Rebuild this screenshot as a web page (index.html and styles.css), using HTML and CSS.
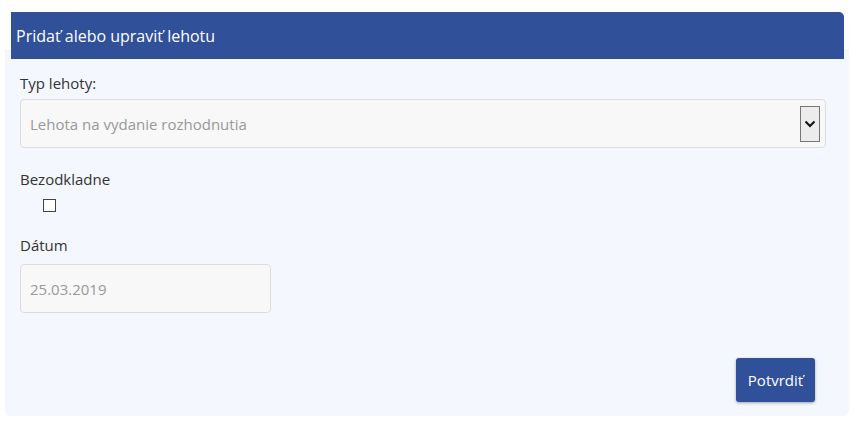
FILE: index.html
```html
<!DOCTYPE html>
<html lang="sk">
<head>
<meta charset="utf-8">
<link rel="stylesheet" href="styles.css">
</head>
<body>
<div class="page">
  <div class="header">Pridať alebo upraviť lehotu</div>
  <div class="panel">
    <div class="field field-type">
      <div class="label">Typ lehoty:</div>
      <div class="select">
        <span class="placeholder">Lehota na vydanie rozhodnutia</span>
        <span class="arrow">
          <svg width="12" height="8" viewBox="0 0 12 8"><path d="M1.5 1.5 L6 6 L10.5 1.5" fill="none" stroke="#111" stroke-width="2"/></svg>
        </span>
      </div>
    </div>
    <div class="field field-check">
      <div class="label">Bezodkladne</div>
      <div class="checkbox"></div>
    </div>
    <div class="field field-date">
      <div class="label">Dátum</div>
      <div class="input">25.03.2019</div>
    </div>
    <div class="actions">
      <button class="btn">Potvrdiť</button>
    </div>
  </div>
</div>
</body>
</html>
```
FILE: styles.css
```css
html, body {
  margin: 0;
  padding: 0;
  background: #ffffff;
}
body {
  font-family: "Open Sans", "Noto Sans", sans-serif;
  font-size: 15px;
  color: #333;
}
.page {
  padding: 12px 8px 0 5px;
}
.header {
  position: relative;
  z-index: 1;
  margin: 0 5px 0 6px;
  height: 47px;
  box-sizing: border-box;
  padding: 0 5px;
  display: flex;
  align-items: center;
  background: #30509a;
  color: #fff;
  font-size: 16px;
  border-radius: 0 5px 0 0;
}
.panel {
  margin-top: -10px;
  padding: 24px 23px 14px 15px;
  background: #f4f7fe;
  border-radius: 0 0 6px 6px;
  height: 367px;
  box-sizing: border-box;
  display: flex;
  flex-direction: column;
}
.label {
  line-height: 20px;
  color: #333;
}
.select {
  margin-top: 6px;
  height: 49px;
  box-sizing: border-box;
  border: 1px solid #dcdcdc;
  border-radius: 4px;
  background: #f8f8f8;
  display: flex;
  align-items: center;
  justify-content: space-between;
  padding: 0 5px 0 9px;
}
.placeholder, .input {
  color: #999;
  font-size: 15px;
}
.arrow {
  width: 20px;
  height: 36px;
  box-sizing: border-box;
  border: 1px solid #777;
  background: #ececec;
  display: flex;
  align-items: center;
  justify-content: center;
}
.field-check {
  margin-top: 21px;
}
.checkbox {
  margin: 10px 0 0 23px;
  width: 13px;
  height: 13px;
  box-sizing: border-box;
  border: 1px solid #444;
  background: #fff;
}
.field-date {
  margin-top: 23px;
}
.input {
  margin-top: 9px;
  width: 251px;
  height: 49px;
  box-sizing: border-box;
  border: 1px solid #dcdcdc;
  border-radius: 4px;
  background: #f8f8f8;
  display: flex;
  align-items: center;
  padding-left: 9px;
}
.actions {
  margin-top: auto;
  display: flex;
  justify-content: flex-end;
  padding-right: 11px;
}
.btn {
  font-family: "Open Sans", "Noto Sans", sans-serif;
  font-size: 15px;
  color: #fff;
  background: #30509a;
  border: none;
  border-radius: 3px;
  width: 79px;
  height: 44px;
  box-shadow: 0 1px 3px rgba(0,0,0,0.35);
}
```
